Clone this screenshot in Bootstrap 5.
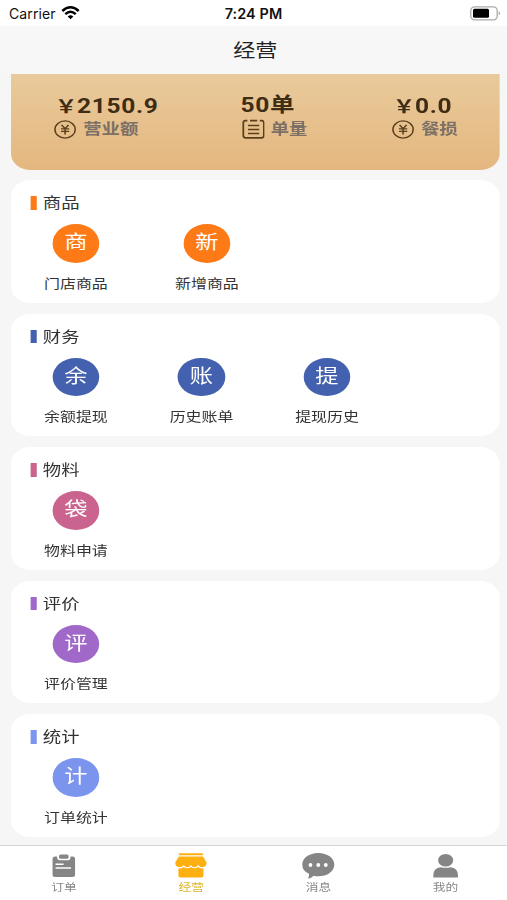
<!DOCTYPE html>
<html lang="zh-CN">
<head>
<meta charset="utf-8">
<meta name="viewport" content="width=device-width, initial-scale=1">
<title>经营</title>
<link href="https://cdn.jsdelivr.net/npm/bootstrap@5.3.0/dist/css/bootstrap.min.css" rel="stylesheet">
<style>
body{width:507px;height:900px;overflow:hidden;background:#f6f6f6;font-family:Roboto,"Noto Sans CJK SC",sans-serif;color:#333}
.statusbar{height:26px;font:14px/27px Inter,sans-serif;color:#111;padding:0 6px 0 9px}
.statusbar svg{display:block}
.status-side{width:90px}
.carrier{letter-spacing:.1px;width:47px}
.clock{font-weight:600;font-size:14.4px;letter-spacing:.1px;margin-right:3px}
/* 414pt wide canvas shown across the full window width */
.screen{width:414px;height:874px;transform:scaleX(1.22464);transform-origin:0 0}
.titlebar{height:48px;font-size:18px;line-height:50px;color:#222;background:#f7f7f7;padding-left:3px}
.summary{height:95.7px;margin:0 5.7px 10.5px 9.2px;border-radius:0 0 16px 16px;background:linear-gradient(#e9ca9b,#e4b77f);display:grid;grid-template-columns:152px 124px auto;padding:19px 0 0 35.2px;align-content:start}
.amount{font-size:20px;line-height:24px;height:24px;font-weight:700;color:#3f2c14;letter-spacing:.55px;white-space:nowrap}
.yen{font-family:"Noto Sans CJK SC",sans-serif;font-size:18px;letter-spacing:0;margin-left:.6px}
.caption-row{height:24px;line-height:24px;font-size:15px;font-weight:700;color:#7b6f66;gap:5.3px}
.caption-row svg{stroke:#5b3f1d;fill:none}
.orders svg{margin-left:.6px}
.orders{gap:4.8px}
.panel{height:122.8px;margin:0 5.7px 10.65px 9.2px;border-radius:16px;border:0;background:#fff;padding:12px 0 0 1.6px}
.panel-title{height:22px;line-height:24px;font-size:15px;padding-left:14.3px;color:#333}
.panel-title i{width:4.6px;height:13.6px;background:var(--c);margin-right:5.3px}
.entry{width:102.5px;padding-top:10px}
.wide .entry:last-child{width:107px;margin-left:2.2px}
.disc{width:38.6px;height:38.6px;border-radius:50%;background:var(--c);color:#fff;font-size:19px;line-height:38px;text-align:center}
.entry-label{font-size:13px;line-height:20px;margin-top:11px;color:#333;white-space:nowrap}
.orange{--c:#fd7a17}.blue{--c:#4361ae}.pink{--c:#ca638d}.purple{--c:#9f68c9}.sky{--c:#7b94ee}
.tabs{height:56px;border-top:1.5px solid #d6d6d6;background:#fff;margin:-2.3px -1.8px 0 0;padding-left:.3px}
.tab{color:#888;font-size:10.4px;line-height:16px;padding-top:7px}
.tab svg{display:block;fill:#858585}
.tab.current{color:#e0b72f}
.tab.current svg{fill:#fdb010}
</style>
<script src="https://cdn.jsdelivr.net/npm/bootstrap@5.3.0/dist/js/bootstrap.bundle.min.js"></script>
</head>
<body>
<header class="statusbar bg-white d-flex align-items-center justify-content-between">
  <div class="status-side d-flex align-items-center"><span class="carrier">Carrier</span>
    <svg class="ms-1" width="22" height="16" viewBox="-1 0 22 16" fill="none" stroke="#000" stroke-width="2.5"><path d="M1.3 6Q9.5-1.5 17.7 6M4.3 9.1Q9.5 4.3 14.7 9.1"/><path d="M9.5 14.3 6.7 11.5Q9.5 9.2 12.3 11.5Z" fill="#000" stroke="none"/></svg>
  </div>
  <span class="clock">7:24 PM</span>
  <div class="status-side d-flex justify-content-end">
    <svg width="31" height="15" viewBox="0 0 31 15"><rect x=".8" y=".8" width="26.4" height="13" rx="3.8" fill="#fff" stroke="#aaa" stroke-width="1.3"/><rect x="3" y="2.8" width="16" height="9" rx="1.5"/><path d="M28.6 5.2q3 2.1 0 4.3z" fill="#aaa"/></svg>
  </div>
</header>
<div class="screen">
  <h1 class="titlebar text-center mb-0 fw-normal">经营</h1>
  <section class="summary">
    <div><div class="amount"><span class="yen">&#xFFE5;</span>2150.9</div>
      <div class="caption-row d-flex align-items-center"><svg width="18.3" height="19" viewBox="0 0 19 19" preserveAspectRatio="none" stroke-width="1.3"><circle cx="9.5" cy="9.5" r="8.6"/><path d="M6.5 5 9.5 8.6 12.5 5M9.5 8.6V14.5M6 8.8H13M6 11.3H13"/></svg>营业额</div></div>
    <div><div class="amount">50单</div>
      <div class="caption-row orders d-flex align-items-center"><svg width="19.3" height="20" viewBox="0 0 23 20" preserveAspectRatio="none" stroke-width="1.7"><path d="M6 1.7H4Q2 1.7 2 4V16.5Q2 18.8 4.2 18.8H19.8Q22 18.8 22 16.5V4Q22 1.7 20 1.7H18M8.5 1.7H15.5M6.5 6.5H17.5M6.5 10.5H17.5M6.5 14.5H17.5"/></svg>单量</div></div>
    <div><div class="amount"><span class="yen">&#xFFE5;</span>0.0</div>
      <div class="caption-row d-flex align-items-center"><svg width="18.3" height="19" viewBox="0 0 19 19" preserveAspectRatio="none" stroke-width="1.3"><circle cx="9.5" cy="9.5" r="8.6"/><path d="M6.5 5 9.5 8.6 12.5 5M9.5 8.6V14.5M6 8.8H13M6 11.3H13"/></svg>餐损</div></div>
  </section>
  <section class="panel card orange">
    <div class="panel-title d-flex align-items-center"><i></i>商品</div>
    <div class="d-flex wide">
      <div class="entry d-flex flex-column align-items-center"><div class="disc">商</div><div class="entry-label">门店商品</div></div>
      <div class="entry d-flex flex-column align-items-center"><div class="disc">新</div><div class="entry-label">新增商品</div></div>
    </div>
  </section>
  <section class="panel card blue">
    <div class="panel-title d-flex align-items-center"><i></i>财务</div>
    <div class="d-flex">
      <div class="entry d-flex flex-column align-items-center"><div class="disc">余</div><div class="entry-label">余额提现</div></div>
      <div class="entry d-flex flex-column align-items-center"><div class="disc">账</div><div class="entry-label">历史账单</div></div>
      <div class="entry d-flex flex-column align-items-center"><div class="disc">提</div><div class="entry-label">提现历史</div></div>
    </div>
  </section>
  <section class="panel card pink">
    <div class="panel-title d-flex align-items-center"><i></i>物料</div>
    <div class="entry d-flex flex-column align-items-center"><div class="disc">袋</div><div class="entry-label">物料申请</div></div>
  </section>
  <section class="panel card purple">
    <div class="panel-title d-flex align-items-center"><i></i>评价</div>
    <div class="entry d-flex flex-column align-items-center"><div class="disc">评</div><div class="entry-label">评价管理</div></div>
  </section>
  <section class="panel card sky">
    <div class="panel-title d-flex align-items-center"><i></i>统计</div>
    <div class="entry d-flex flex-column align-items-center"><div class="disc">计</div><div class="entry-label">订单统计</div></div>
  </section>
  <nav class="tabs row g-0">
    <div class="tab col d-flex flex-column align-items-center">
      <svg width="27.8" height="27" viewBox="0 0 34 27" preserveAspectRatio="none"><path d="M8.500 3.500H10.500Q10.500 7.200 13 7.200H21.500Q24 7.200 24 3.500H26Q28.500 3.500 28.500 6V21.500Q28.500 24 26 24H8.500Q6 24 6 21.500V6Q6 3.500 8.500 3.500Z"/><rect x="12.500" y="1.500" width="9.500" height="4.300" rx="1.500"/><path d="M9 11.300H17M9 15H24.500" stroke="#fff" stroke-width="1.600"/></svg>订单</div>
    <div class="tab current col d-flex flex-column align-items-center">
      <svg width="27.8" height="27" viewBox="0 0 34 27" preserveAspectRatio="none"><path d="M5 .3H29V2.300H5ZM5 3.500H29L32.700 9.500Q32.500 14 28.500 14.200Q25.500 14.200 24.200 12Q22.500 14.200 20.500 14.200Q18 14.200 17 12Q15.700 14.200 13.500 14.200Q11 14.200 9.800 12Q8.500 14.200 5.500 14.200Q1.500 14 1.300 9.500Z"/><path d="M4.500 15.500Q8 15.700 9.800 13.900Q13.400 16.800 17 13.900Q20.500 16.800 24.200 13.900Q26 15.700 29.500 15.500V22.800Q29.500 24.500 27.800 24.500H6.200Q4.500 24.500 4.500 22.800Z"/></svg>经营</div>
    <div class="tab col d-flex flex-column align-items-center">
      <svg width="27.8" height="27" viewBox="0 0 34 27" preserveAspectRatio="none"><path d="M17 0C26 0 33 5 33 11.700S26 23.200 17 23.200Q14.500 23.200 12.500 22.700Q9.500 25.500 6.700 25.500Q8.300 23 7.700 20.800Q1 17.800 1 11.700C1 5 8 0 17 0Z"/><g fill="#fff"><circle cx="9.200" cy="12" r="1.900"/><circle cx="17" cy="12" r="1.900"/><circle cx="24.500" cy="12" r="1.900"/></g></svg>消息</div>
    <div class="tab col d-flex flex-column align-items-center">
      <svg width="27.8" height="27" viewBox="0 0 34 27" preserveAspectRatio="none"><ellipse cx="17" cy="7.200" rx="7.500" ry="6.300"/><path d="M4.700 24.500V22Q5 15 12 14.200Q17 15.500 22 14.200Q29 15 29.300 22V24.500Z"/></svg>我的</div>
  </nav>
</div>
</body>
</html>
